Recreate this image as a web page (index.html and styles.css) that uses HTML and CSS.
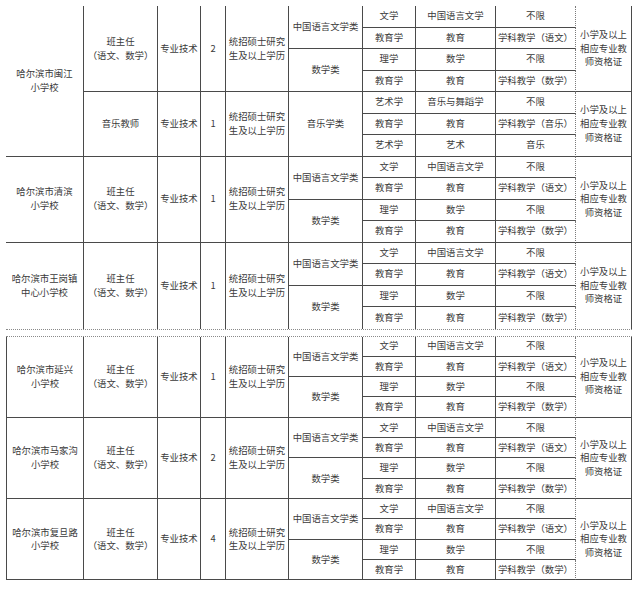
FILE: index.html
```html
<!DOCTYPE html>
<html lang="zh-CN">
<head>
<meta charset="utf-8">
<title>招聘岗位表</title>
<link rel="stylesheet" href="styles.css">
</head>
<body>
<div class="page">
  <div class="sec sec-top">
    <table class="grid top">
      <colgroup>
        <col class="c1"><col class="c2"><col class="c3"><col class="c4"><col class="c5">
        <col class="c6"><col class="c7"><col class="c8"><col class="c9"><col class="c10">
      </colgroup>
      <tbody>
        <tr>
          <td class="sch" rowspan="7">哈尔滨市闽江<br>小学校</td>
          <td rowspan="4">班主任<br>（语文、数学）</td>
          <td rowspan="4">专业技术</td>
          <td rowspan="4">2</td>
          <td rowspan="4">统招硕士研究<br>生及以上学历</td>
          <td rowspan="2">中国语言文学类</td>
          <td>文学</td><td>中国语言文学</td><td class="dv">不限</td>
          <td rowspan="4" class="q">小学及以上<br>相应专业教<br>师资格证</td>
        </tr>
        <tr><td>教育学</td><td>教育</td><td class="dv">学科教学（语文）</td></tr>
        <tr><td rowspan="2">数学类</td><td>理学</td><td>数学</td><td class="dv">不限</td></tr>
        <tr><td>教育学</td><td>教育</td><td class="dv">学科教学（数学）</td></tr>
        <tr>
          <td rowspan="3">音乐教师</td>
          <td rowspan="3">专业技术</td>
          <td rowspan="3">1</td>
          <td rowspan="3">统招硕士研究<br>生及以上学历</td>
          <td rowspan="3">音乐学类</td>
          <td>艺术学</td><td>音乐与舞蹈学</td><td class="dv">不限</td>
          <td rowspan="3" class="q">小学及以上<br>相应专业教<br>师资格证</td>
        </tr>
        <tr><td>教育学</td><td>教育</td><td class="dv">学科教学（音乐）</td></tr>
        <tr><td>艺术学</td><td>艺术</td><td class="dv">音乐</td></tr>

        <tr>
          <td class="sch" rowspan="4">哈尔滨市清滨<br>小学校</td>
          <td rowspan="4">班主任<br>（语文、数学）</td>
          <td rowspan="4">专业技术</td>
          <td rowspan="4">1</td>
          <td rowspan="4">统招硕士研究<br>生及以上学历</td>
          <td rowspan="2">中国语言文学类</td>
          <td>文学</td><td>中国语言文学</td><td class="dv">不限</td>
          <td rowspan="4" class="q">小学及以上<br>相应专业教<br>师资格证</td>
        </tr>
        <tr><td>教育学</td><td>教育</td><td class="dv">学科教学（语文）</td></tr>
        <tr><td rowspan="2">数学类</td><td>理学</td><td>数学</td><td class="dv">不限</td></tr>
        <tr><td>教育学</td><td>教育</td><td class="dv">学科教学（数学）</td></tr>

        <tr>
          <td class="sch nb" rowspan="4">哈尔滨市王岗镇<br>中心小学校</td>
          <td class="nb" rowspan="4">班主任<br>（语文、数学）</td>
          <td class="nb" rowspan="4">专业技术</td>
          <td class="nb" rowspan="4">1</td>
          <td class="nb" rowspan="4">统招硕士研究<br>生及以上学历</td>
          <td rowspan="2">中国语言文学类</td>
          <td>文学</td><td>中国语言文学</td><td class="dv">不限</td>
          <td rowspan="4" class="q nb">小学及以上<br>相应专业教<br>师资格证</td>
        </tr>
        <tr><td>教育学</td><td>教育</td><td class="dv">学科教学（语文）</td></tr>
        <tr><td class="nb" rowspan="2">数学类</td><td>理学</td><td>数学</td><td class="dv">不限</td></tr>
        <tr><td class="nb">教育学</td><td class="nb">教育</td><td class="dv nb">学科教学（数学）</td></tr>
      </tbody>
    </table>
  </div>

  <div class="sec sec-bot">
    <table class="grid bot">
      <colgroup>
        <col class="c1"><col class="c2"><col class="c3"><col class="c4"><col class="c5">
        <col class="c6"><col class="c7"><col class="c8"><col class="c9"><col class="c10">
      </colgroup>
      <tbody>
        <tr>
          <td class="sch" rowspan="4">哈尔滨市延兴<br>小学校</td>
          <td rowspan="4">班主任<br>（语文、数学）</td>
          <td rowspan="4">专业技术</td>
          <td rowspan="4">1</td>
          <td rowspan="4">统招硕士研究<br>生及以上学历</td>
          <td rowspan="2">中国语言文学类</td>
          <td>文学</td><td>中国语言文学</td><td class="dv">不限</td>
          <td rowspan="4" class="q">小学及以上<br>相应专业教<br>师资格证</td>
        </tr>
        <tr><td>教育学</td><td>教育</td><td class="dv">学科教学（语文）</td></tr>
        <tr><td rowspan="2">数学类</td><td>理学</td><td>数学</td><td class="dv">不限</td></tr>
        <tr><td>教育学</td><td>教育</td><td class="dv">学科教学（数学）</td></tr>

        <tr>
          <td class="sch" rowspan="4">哈尔滨市马家沟<br>小学校</td>
          <td rowspan="4">班主任<br>（语文、数学）</td>
          <td rowspan="4">专业技术</td>
          <td rowspan="4">2</td>
          <td rowspan="4">统招硕士研究<br>生及以上学历</td>
          <td rowspan="2">中国语言文学类</td>
          <td>文学</td><td>中国语言文学</td><td class="dv">不限</td>
          <td rowspan="4" class="q">小学及以上<br>相应专业教<br>师资格证</td>
        </tr>
        <tr><td>教育学</td><td>教育</td><td class="dv">学科教学（语文）</td></tr>
        <tr><td rowspan="2">数学类</td><td>理学</td><td>数学</td><td class="dv">不限</td></tr>
        <tr><td>教育学</td><td>教育</td><td class="dv">学科教学（数学）</td></tr>

        <tr>
          <td class="sch" rowspan="4">哈尔滨市复旦路<br>小学校</td>
          <td rowspan="4">班主任<br>（语文、数学）</td>
          <td rowspan="4">专业技术</td>
          <td rowspan="4">4</td>
          <td rowspan="4">统招硕士研究<br>生及以上学历</td>
          <td rowspan="2">中国语言文学类</td>
          <td>文学</td><td>中国语言文学</td><td class="dv">不限</td>
          <td rowspan="4" class="q">小学及以上<br>相应专业教<br>师资格证</td>
        </tr>
        <tr><td>教育学</td><td>教育</td><td class="dv">学科教学（语文）</td></tr>
        <tr><td rowspan="2">数学类</td><td>理学</td><td>数学</td><td class="dv">不限</td></tr>
        <tr><td>教育学</td><td>教育</td><td class="dv">学科教学（数学）</td></tr>
      </tbody>
    </table>
  </div>
</div>
</body>
</html>
```
FILE: styles.css
```css
html, body {
  margin: 0;
  padding: 0;
  background: #ffffff;
}

body {
  font-family: "Noto Sans CJK SC", "Liberation Sans", sans-serif;
  font-size: 9.4px;
  color: #3a3a3a;
}

.page {
  padding: 6px 0 0 6px;
  width: 626px;
}

.sec {
  width: 626px;
}

.sec-top {
  border-bottom: 1px dotted #8a8a8a;
}

.sec-bot {
  margin-top: 6px;
  border-top: 1px dotted #8a8a8a;
}

.grid {
  border-collapse: separate;
  border-spacing: 0;
  table-layout: fixed;
  width: 626px;
}

.c1 { width: 78px; }
.c2 { width: 74px; }
.c3 { width: 43px; }
.c4 { width: 25px; }
.c5 { width: 63px; }
.c6 { width: 74px; }
.c7 { width: 53px; }
.c8 { width: 80px; }
.c9 { width: 80px; }
.c10 { width: 56px; }

.grid td {
  border-right: 1px solid #4a4a4a;
  border-bottom: 1px solid #4a4a4a;
  padding: 0 1px;
  text-align: center;
  vertical-align: middle;
  line-height: 13.6px;
  white-space: nowrap;
  overflow: hidden;
}

.top tr {
  height: 21.5px;
}

.bot tr {
  height: 20.33px;
}

.grid td.dv {
  border-right: 1px dotted #7a7a7a;
}

.grid td.nb {
  border-bottom: none;
}

.bot td.sch {
  border-left: 1px solid #4a4a4a;
}
```
